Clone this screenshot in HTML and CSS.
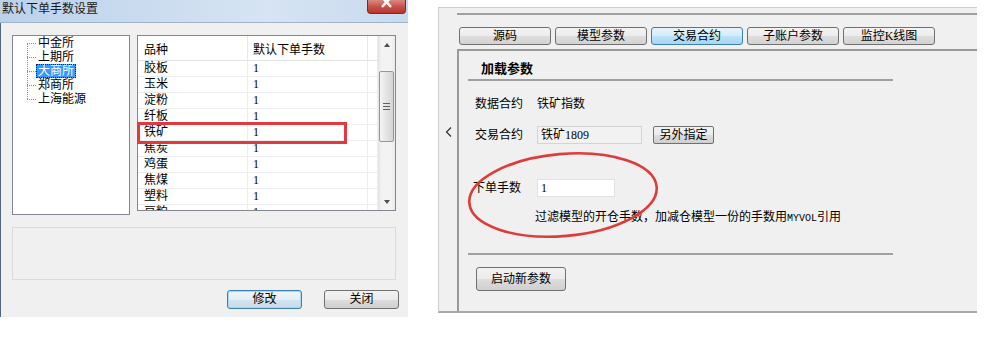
FILE: index.html
```html
<!DOCTYPE html>
<html lang="zh">
<head>
  <meta charset="UTF-8" />
  <title>默认下单手数设置</title>
  <link rel="stylesheet" href="styles.css">
</head>
<body>
  <div class="page">
    <div class="dlg">
      <div class="dlg-title">
        <span>默认下单手数设置</span>
        <span class="dlg-close">
          <svg width="37" height="13" viewBox="0 0 37 13"><path d="M14 -3 L23 7 M23 -3 L14 7" stroke="#fff" stroke-width="2.6" fill="none"/></svg>
        </span>
      </div>
      <div class="dlg-body">
        <div class="dlg-top">
          <div class="tree">
            <div class="tree-items">
              <div class="tree-item"><span class="tree-label">中金所</span></div>
              <div class="tree-item"><span class="tree-label">上期所</span></div>
              <div class="tree-item"><span class="tree-label sel">大商所</span></div>
              <div class="tree-item"><span class="tree-label">郑商所</span></div>
              <div class="tree-item"><span class="tree-label">上海能源</span></div>
            </div>
          </div>
          <div class="list">
            <div class="list-main">
              <div class="list-row list-head"><span>品种</span><span>默认下单手数</span><span></span></div>
              <div class="list-row"><span>胶板</span><span>1</span><span></span></div>
              <div class="list-row"><span>玉米</span><span>1</span><span></span></div>
              <div class="list-row"><span>淀粉</span><span>1</span><span></span></div>
              <div class="list-row"><span>纤板</span><span>1</span><span></span></div>
              <div class="list-row"><span>铁矿</span><span>1</span><span></span></div>
              <div class="list-row"><span>焦炭</span><span>1</span><span></span></div>
              <div class="list-row"><span>鸡蛋</span><span>1</span><span></span></div>
              <div class="list-row"><span>焦煤</span><span>1</span><span></span></div>
              <div class="list-row"><span>塑料</span><span>1</span><span></span></div>
              <div class="list-row"><span>豆粕</span><span>1</span><span></span></div>
            </div>
            <div class="scroll">
              <div class="sb-arrow"><span class="tri-up"></span></div>
              <div class="sb-thumb"><span class="grip"></span></div>
              <div class="sb-track"></div>
              <div class="sb-arrow"><span class="tri-down"></span></div>
            </div>
            <div class="mark"></div>
          </div>
        </div>
        <div class="info"></div>
        <div class="dlg-btns">
          <button class="btn btn-focus">修改</button>
          <button class="btn">关闭</button>
        </div>
      </div>
    </div>

    <div class="pane">
      <div class="side">
        <svg width="7" height="10" viewBox="0 0 7 10"><polyline points="6,0.5 1.5,5 6,9.5" stroke="#333" stroke-width="1.2" fill="none"/></svg>
      </div>
      <div class="main">
        <div class="main-rule"></div>
        <div class="tabs">
          <div class="tab">源码</div>
          <div class="tab">模型参数</div>
          <div class="tab tab-on">交易合约</div>
          <div class="tab">子账户参数</div>
          <div class="tab">监控K线图</div>
        </div>
        <div class="content">
          <div class="group">
            <div class="group-title">加载参数</div>
            <div class="row row-first">
              <span class="row-label">数据合约</span>
              <span>铁矿指数</span>
            </div>
            <div class="row row-trade">
              <span class="row-label">交易合约</span>
              <span class="field field-off">铁矿1809</span>
              <button class="btn btn-small">另外指定</button>
            </div>
            <div class="row row-qty">
              <span class="row-label">下单手数</span>
              <span class="field field-qty">1</span>
            </div>
            <div class="desc">过滤模型的开仓手数，加减仓模型一份的手数用<span class="mono">MYVOL</span>引用</div>
            <div class="group-rule"></div>
            <button class="btn btn-start">启动新参数</button>
          </div>
          <svg class="ring" width="200" height="94" viewBox="0 0 200 94">
            <ellipse cx="100" cy="47" rx="94" ry="41" transform="rotate(-5 100 47)" stroke="#e03b3b" stroke-width="2.6" fill="none"/>
          </svg>
        </div>
      </div>
    </div>
  </div>
</body>
</html>
```

FILE: styles.css
```css
* { box-sizing: border-box; margin: 0; padding: 0; }
body {
  background: #fff;
  font-family: "Liberation Serif", "Noto Sans CJK SC", sans-serif;
  font-size: 12px;
  line-height: 14px;
  color: #000;
}

.page {
  display: flex;
  align-items: flex-start;
}

/* left dialog */
.dlg {
  width: 408px;
  height: 317px;
  display: flex;
  flex-direction: column;
}

.dlg-title {
  height: 23px;
  display: flex;
  padding: 2px 0 0 2px;
  background: linear-gradient(90deg, #bcd1ea, #d6e4f3 65%, #c8daee);
  border-bottom: 1px solid #9fb3c9;
  color: #1a1a1a;
}

.dlg-close {
  align-self: flex-start;
  margin: -2px 2px 0 auto;
  width: 39px;
  height: 14px;
  overflow: hidden;
  border: 1px solid #7c2a22;
  border-top: none;
  border-radius: 0 0 4px 4px;
  background: linear-gradient(#d98a80, #c8524a 50%, #b8362c);
}

.dlg-close svg { display: block; }

.dlg-body {
  flex: 1;
  background: #f0f0f0;
  border-left: 1px solid #52657c;
  padding: 12px 9px 8px 11px;
  display: flex;
  flex-direction: column;
}

.dlg-top {
  display: flex;
  gap: 7px;
  align-items: flex-start;
}

.tree {
  width: 118px;
  height: 180px;
  background: #fff;
  border: 1px solid #828790;
}

.tree-items {
  position: relative;
  margin-left: 14px;
}

.tree-items::before {
  content: "";
  position: absolute;
  left: 0;
  top: 7px;
  bottom: 7px;
  border-left: 1px dotted #8c8c8c;
}

.tree-item {
  display: flex;
  align-items: center;
  height: 14px;
}

.tree-item::before {
  content: "";
  width: 9px;
  border-top: 1px dotted #8c8c8c;
}

.tree-label {
  padding: 0 2px;
  line-height: 14px;
}

.tree-label.sel {
  background: #3399ff;
  color: #fff;
  outline: 1px dotted #222;
  outline-offset: -1px;
}

.list {
  position: relative;
  width: 259px;
  height: 176px;
  background: #fff;
  border: 1px solid #828790;
  display: flex;
}

.list-main {
  flex: 1;
  overflow: hidden;
}

.list-row {
  display: grid;
  grid-template-columns: 110px 120px 10px;
  height: 16px;
  line-height: 15px;
  border-bottom: 1px solid #ededed;
}

.list-row span {
  padding-left: 6px;
  border-right: 1px solid #ededed;
}

.list-row span:nth-child(2) { padding-left: 5px; }

.list-head {
  height: 25px;
  line-height: 14px;
  border-bottom: 1px solid #e3e3e3;
}

.list-head span {
  padding-top: 7px;
  border-right-color: #e8e8e8;
}

.scroll {
  width: 17px;
  display: flex;
  flex-direction: column;
  align-items: center;
  background: linear-gradient(90deg, #e3e3e3, #f3f3f3 20%, #f3f3f3 80%, #e8e8e8);
}

.sb-arrow {
  height: 17px;
  display: flex;
  align-items: center;
  justify-content: center;
}

.tri-up {
  border-left: 3.5px solid transparent;
  border-right: 3.5px solid transparent;
  border-bottom: 4px solid #4d4d4d;
}

.tri-down {
  border-left: 3.5px solid transparent;
  border-right: 3.5px solid transparent;
  border-top: 4px solid #4d4d4d;
}

.sb-thumb {
  margin-top: 18px;
  width: 15px;
  height: 71px;
  border: 1px solid #979797;
  border-radius: 2px;
  background: linear-gradient(90deg, #f4f4f4, #e4e4e4 50%, #d4d4d4);
  display: flex;
  align-items: center;
  justify-content: center;
}

.grip {
  width: 7px;
  height: 7px;
  background: repeating-linear-gradient(#5f5f5f 0 1px, transparent 1px 3px);
}

.sb-track { flex: 1; }

.mark {
  position: absolute;
  left: -1px;
  top: 86px;
  width: 210px;
  height: 22px;
  border: 3px solid #e2393f;
}

.info {
  margin-top: 12px;
  width: 384px;
  height: 53px;
  border: 1px solid #dadada;
  background: #f0f0f0;
}

.dlg-btns {
  margin-top: 10px;
  display: flex;
  justify-content: flex-end;
  gap: 22px;
}

.btn {
  font: inherit;
  width: 75px;
  height: 19px;
  line-height: 17px;
  color: #000;
  border: 1px solid #707070;
  border-radius: 3px;
  background: linear-gradient(#f2f2f2, #ebebeb 50%, #dddddd 51%, #cfcfcf);
  text-align: center;
}

.btn-focus {
  border-color: #3c7fb1;
  box-shadow: inset 0 0 0 1px #a6d7f3;
  background: linear-gradient(#eef6fb, #e3eef6 50%, #d4e3ee 51%, #c6dbea);
}

/* right pane */
.pane {
  margin: 7px 0 0 30px;
  width: 539px;
  height: 306px;
  background: #f0f0f0;
  border-top: 1px solid #cdcdcd;
  border-left: 1px solid #cdcdcd;
  border-bottom: 2px solid #a7a7a7;
  display: flex;
}

.side {
  width: 18px;
  padding: 119px 0 0 6px;
}

.side svg { display: block; }

.main {
  flex: 1;
  display: flex;
  flex-direction: column;
}

.main-rule {
  margin-top: 5px;
  border-top: 2px solid #a0a0a0;
}

.tabs {
  display: flex;
  gap: 4px;
  padding-left: 2px;
  margin-top: 12px;
}

.tab {
  width: 92px;
  height: 18px;
  line-height: 16px;
  text-align: center;
  border: 1px solid #707070;
  border-radius: 3px;
  background: linear-gradient(#f3f3f3, #ececec 50%, #dedede 51%, #d2d2d2);
}

.tab-on {
  border-color: #3c7fb1;
  background: linear-gradient(#e6f4fc, #d4ecfb 50%, #bde3f8 51%, #a6d5f2);
}

.content {
  position: relative;
  flex: 1;
  margin-top: 4px;
  border-top: 2px solid #9a9a9a;
  border-left: 2px solid #9a9a9a;
  padding-left: 9px;
}

.group { width: 425px; }

.group-title {
  margin-top: 11px;
  padding: 0 0 3px 13px;
  font-size: 13px;
  font-weight: bold;
  border-bottom: 2px solid #a0a0a0;
}

.row {
  display: flex;
  align-items: center;
  padding-left: 7px;
}

.row-label { width: 62px; }

.row-first { margin-top: 16px; }
.row-trade { margin-top: 15px; height: 18px; }
.row-qty { margin-top: 35px; height: 18px; padding-left: 5px; }
.row-qty .row-label { width: 64px; }

.field {
  height: 18px;
  line-height: 16px;
  padding-left: 3px;
}

.field-off {
  width: 105px;
  border: 1px solid #d4d4d4;
  background: #f2f2f2;
}

.field-qty {
  width: 78px;
  border: 1px solid #e2e2e2;
  background: #fff;
}

.btn-small {
  margin-left: 11px;
  width: 61px;
  height: 18px;
  line-height: 16px;
  border-radius: 2px;
}

.desc {
  margin-top: 13px;
  padding-left: 67px;
}

.mono {
  font-family: "Liberation Mono", monospace;
  font-size: 10px;
}

.group-rule {
  margin-top: 27px;
  border-top: 2px solid #a0a0a0;
}

.btn-start {
  display: block;
  margin: 12px 0 0 8px;
  width: 90px;
  height: 24px;
  line-height: 22px;
}

.ring {
  position: absolute;
  left: 4px;
  top: 97px;
}
```
